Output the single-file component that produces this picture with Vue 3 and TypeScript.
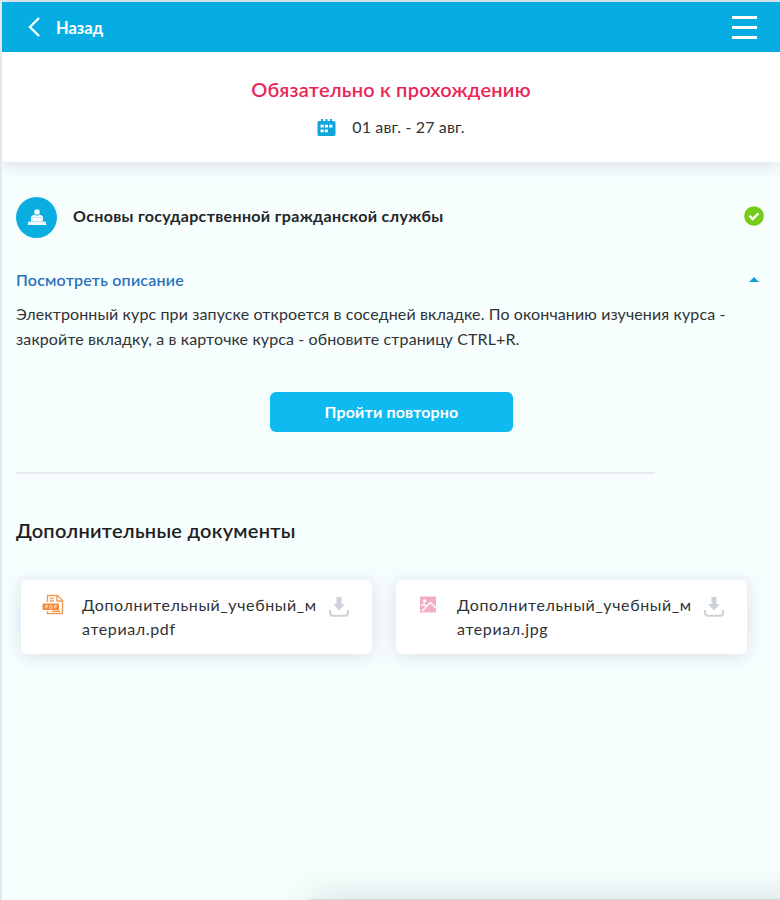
<template>
  <div class="page">
    <header class="topbar">
      <button class="back" type="button">
        <svg class="back-icon" width="14" height="22" viewBox="0 0 14 22">
          <path d="M12 2 3 11l9 9" />
        </svg>
        <span class="back-label">Назад</span>
      </button>
      <button class="burger" type="button" aria-label="Меню">
        <span />
        <span />
        <span />
      </button>
    </header>

    <section class="hero">
      <h1 class="hero-title">Обязательно к прохождению</h1>
      <div class="dates">
        <svg width="19" height="17" viewBox="0 0 19 17">
          <path
            class="calendar"
            fill-rule="evenodd"
            d="M2 2h2V0h2v2h2.500V0h2v2H13V0h2v2h2q1.500 0 1.500 1.500v12q0 1.500-1.500 1.500H2Q.5 17 .5 15.500v-12Q.5 2 2 2zM3.500 5.700v2.900h3.200V5.700zm4.400 0v2.900H11V5.700zm4.300 0v2.900h3.200V5.700zM3.500 10.400v2.900h3.200v-2.900zm4.400 0v2.900H11v-2.900z"
          />
        </svg>
        <span class="dates-label">01 авг. - 27 авг.</span>
      </div>
    </section>

    <main class="content">
      <div class="course">
        <div class="course-icon">
          <svg width="20" height="17" viewBox="0 0 20 17">
            <circle cx="10" cy="3" r="2.800" />
            <path d="M4 12V9Q4 6 8 5.500l2 1.500 2-1.500Q16 6 16 9v3z" />
            <path class="screen" d="M6 8.500h8l.8 4H5.200z" />
            <path d="M1.500 12.500h17l1 3.500H.5z" />
          </svg>
        </div>
        <h2 class="course-title">Основы государственной гражданской службы</h2>
        <svg class="done" width="20" height="20" viewBox="0 0 20 20">
          <circle cx="10" cy="10" r="9.800" />
          <path d="m5.500 9.800 3.200 3.200 5.800-5.600" />
        </svg>
      </div>

      <button class="toggle" type="button" @click="isOpen = !isOpen">
        <span class="toggle-label">Посмотреть описание</span>
        <svg class="caret" :class="{ closed: !isOpen }" width="10" height="5" viewBox="0 0 10 5">
          <path d="M0 5 5 0l5 5z" />
        </svg>
      </button>
      <p v-show="isOpen" class="description">
        Электронный курс при запуске откроется в соседней вкладке. По окончанию изучения курса -<br />
        закройте вкладку, а в карточке курса - обновите страницу CTRL+R.
      </p>

      <button class="retry" type="button">
        <span class="retry-label">Пройти повторно</span>
      </button>

      <hr class="divider" />

      <h2 class="docs-title">Дополнительные документы</h2>
      <div class="docs">
        <div v-for="doc in docs" :key="doc.name" class="doc">
          <svg v-if="doc.type === 'pdf'" class="doc-icon" width="22" height="21" viewBox="0 0 22 21">
            <path class="pdf-sheet" d="M5.500 8V1.500h10l5 5v13h-15V17" />
            <path class="pdf-sheet" d="M15 1.500V7h5.500M8 4.500h4M8 7h4M10 17.200h8" />
            <rect class="pdf-badge" x="0.500" y="9.500" width="16.500" height="6.500" rx="1" />
            <path class="pdf-marks" d="M3.500 14.500v-3h2v1.700h-2M8 11.500v3h1.200q1-.2 1-1.500t-1-1.500zM12.700 14.500v-3h2.300M12.700 13h2" />
          </svg>
          <svg v-else class="doc-icon" width="22" height="21" viewBox="0 0 22 21">
            <rect class="img-sheet" x="3" y="2.500" width="16" height="16" rx="0.500" />
            <circle class="img-sun" cx="7.700" cy="7" r="1.700" />
            <path class="img-hill" d="m5 17 8.500-8.500L19 14M4 12l3-2 2 2" />
          </svg>
          <span class="doc-name">{{ doc.name }}</span>
          <svg class="download" width="20" height="20" viewBox="0 0 20 20">
            <path class="arrow" d="M7.500 0h5v7h3.300L10 13.500 4.200 7h3.300z" />
            <path class="tray" d="M1 13v2.500Q1 18.800 4 18.800h12q3 0 3-3.300V13" />
          </svg>
        </div>
      </div>
    </main>

    <div class="bottom-panel" />
  </div>
</template>

<script lang="ts" setup>
import { ref } from 'vue'

interface Doc {
    name: string
    type: 'pdf' | 'jpg'
}

const isOpen = ref<boolean>(true)

const docs: Doc[] = [
    { name: 'Дополнительный_учебный_материал.pdf', type: 'pdf' },
    { name: 'Дополнительный_учебный_материал.jpg', type: 'jpg' }
]
</script>

<style>
body {
    background: #f7fefe
}
</style>

<style scoped>
.page {
    position: relative;
    box-sizing: border-box;
    height: 900px;
    overflow: hidden;
    border-top: 2px solid #d5e4ec;
    border-left: 2px solid #e4e8ed;
    background: #f7fefe;
    font-family: Lato, 'Open Sans', sans-serif;
    color: #303336
}

button {
    padding: 0;
    border: 0;
    background: none;
    font-family: inherit;
    cursor: pointer
}

h1,
h2,
p {
    margin: 0
}

svg {
    display: block;
    flex: none
}

.topbar {
    position: relative;
    z-index: 1;
    display: flex;
    align-items: center;
    justify-content: space-between;
    height: 50px;
    padding: 0 23px 0 25px;
    background: #05ade3
}

.back {
    display: flex;
    align-items: center;
    gap: 15px;
    color: #fff
}

.back-icon path {
    fill: none;
    stroke: #fff;
    stroke-width: 2.400
}

.back-label {
    padding-top: 2px;
    font-size: 16.500px;
    font-weight: 700;
    line-height: 24px
}

.burger {
    display: flex;
    flex-direction: column;
    gap: 7px;
    width: 25px
}

.burger span {
    height: 3px;
    background: #fff
}

.hero {
    display: flex;
    flex-direction: column;
    align-items: center;
    box-sizing: border-box;
    height: 110px;
    padding-top: 23px;
    background: #fff;
    box-shadow: 0 2px 18px rgba(70, 80, 130, .2)
}

.hero-title {
    font-size: 20px;
    font-weight: 600;
    line-height: 28px;
    letter-spacing: .22px;
    color: #ea2556
}

.dates {
    display: flex;
    align-items: center;
    gap: 16px;
    margin-top: 12px
}

.calendar {
    fill: #12a5dc
}

.dates-label {
    font-size: 16px;
    line-height: 24px;
    letter-spacing: .13px
}

.content {
    padding: 35px 16px 0 14px
}

.course {
    display: flex;
    align-items: center;
    height: 40px
}

.course-icon {
    display: flex;
    align-items: center;
    justify-content: center;
    width: 41px;
    height: 41px;
    border-radius: 50%;
    background: #0aade0
}

.course-icon svg {
    fill: #eefaff
}

.course-icon .screen {
    fill: #fff;
    stroke: #8bd5ef;
    stroke-width: .5
}

.course-title {
    flex: 1;
    margin: -2px 0 0 16px;
    font-size: 16px;
    font-weight: 700;
    line-height: 24px;
    letter-spacing: .33px;
    color: #222528
}

.done {
    margin-top: -2px
}

.done circle {
    fill: #75cc18
}

.done path {
    fill: none;
    stroke: #fff;
    stroke-width: 2.400
}

.toggle {
    display: flex;
    align-items: center;
    justify-content: space-between;
    width: 100%;
    height: 24px;
    margin-top: 30px;
    padding-right: 5px
}

.toggle-label {
    font-size: 16px;
    font-weight: 600;
    letter-spacing: .2px;
    color: #2a74bd
}

.caret {
    fill: #12a0d4
}

.caret.closed {
    transform: rotate(180deg)
}

.description {
    margin-top: 10px;
    font-size: 16px;
    line-height: 25px;
    letter-spacing: .12px;
    white-space: nowrap
}

.retry {
    display: block;
    width: 243px;
    height: 40px;
    margin: 41px 0 0 254px;
    padding-bottom: 2px;
    border-radius: 6px;
    background: #0fbaf0;
    color: #fff
}

.retry-label {
    font-size: 16px;
    font-weight: 700;
    letter-spacing: .15px
}

.divider {
    width: 639px;
    height: 2px;
    margin: 40px 0 0;
    border: 0;
    background: #e6eaec
}

.docs-title {
    margin-top: 42px;
    font-size: 20px;
    font-weight: 600;
    line-height: 28px;
    letter-spacing: .26px;
    color: #1d2023
}

.docs {
    display: grid;
    grid-template-columns: 351px 351px;
    gap: 24px;
    margin: 36px 0 0 5px
}

.doc {
    display: flex;
    align-items: flex-start;
    box-sizing: border-box;
    height: 74px;
    padding: 13px 23px 0 21px;
    border-radius: 6px;
    background: #fff;
    box-shadow: 0 2px 18px rgba(70, 85, 140, .18)
}

.doc-icon {
    margin-top: 1px
}

.doc-name {
    width: 236px;
    margin-left: 18px;
    font-size: 16px;
    line-height: 24px;
    letter-spacing: .63px;
    word-break: break-all
}

.pdf-sheet {
    fill: none;
    stroke: #f39a55;
    stroke-width: 1.400
}

.pdf-badge {
    fill: #f18a3c
}

.pdf-marks {
    fill: none;
    stroke: #ffe3cb;
    stroke-width: .8
}

.img-sheet {
    fill: #f3aec5
}

.img-sun {
    fill: #fff
}

.img-hill {
    fill: none;
    stroke: #fff;
    stroke-width: 1.500
}

.download {
    margin: 4px 0 0 auto
}

.arrow {
    fill: #ccd2d8
}

.tray {
    fill: none;
    stroke: #ccd2d8;
    stroke-width: 2
}

.bottom-panel {
    position: absolute;
    left: 307px;
    right: -40px;
    bottom: -39px;
    height: 40px;
    background: #d5dadb;
    box-shadow: 0 0 38px rgba(40, 50, 55, .17)
}
</style>
